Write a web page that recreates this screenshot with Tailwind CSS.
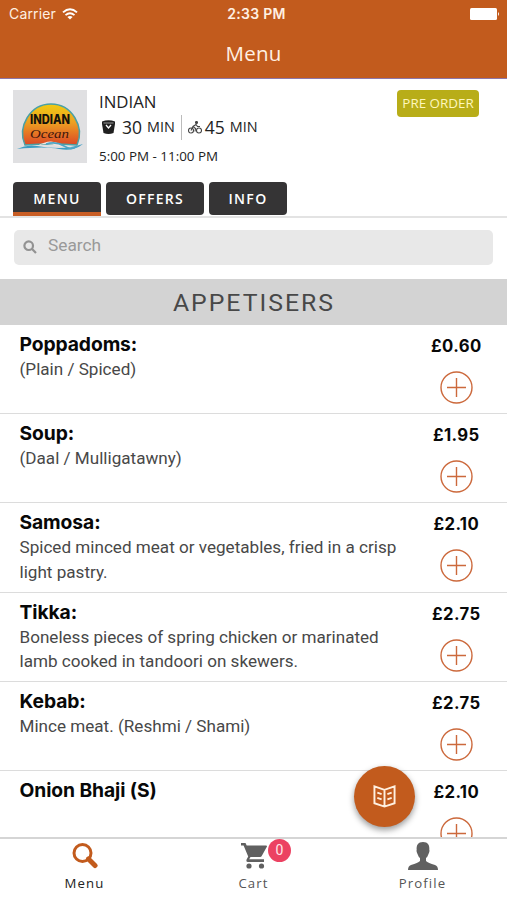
<!DOCTYPE html>
<html lang="en">
<head>
<meta charset="utf-8">
<title>Menu</title>
<script src="https://cdn.jsdelivr.net/npm/@tailwindcss/browser@4"></script>
</head>
<body class="bg-white">
<div class="relative w-[507px] h-[900px] overflow-hidden bg-white flex flex-col font-['Open_Sans',sans-serif] text-[#222]">
  <header class="h-[79px] shrink-0 bg-[#c25b1d] border-b border-[#8d76a8] text-[#fff0e2]">
    <div class="h-7 grid grid-cols-3 items-center pl-[9px] pr-[7px] font-[Inter,sans-serif]">
      <div class="flex items-center gap-[6px]">
        <span class="text-[14px] leading-5 tracking-[0.15px]">Carrier</span>
        <svg class="w-4 h-3" viewBox="0 0 16 12" fill="none" stroke="#fff" stroke-width="1.9"><path d="M1 4.4Q8-2 15 4.4M3.5 7.1Q8 3.2 12.500 7.1"/><path d="M8 11.500L5.400 8.900Q8 7 10.600 8.900Z" fill="#fff" stroke="none"/></svg>
      </div>
      <span class="text-center text-[14px] font-semibold leading-5 tracking-[0.3px] whitespace-nowrap pl-1">2:33 PM</span>
      <svg class="w-[30px] h-3 justify-self-end" viewBox="0 0 30 12" fill="#fff"><rect width="27" height="12" rx="1.500"/><path d="M28 4q2 2 0 4z"/></svg>
    </div>
    <h1 class="text-center text-[20.5px] leading-[50px] font-normal tracking-[0.2px]">Menu</h1>
  </header>

  <section class="h-[139px] shrink-0 border-b-2 border-[#e3e3e3] pl-[13px] flex flex-col justify-between pt-3">
    <div class="flex">
      <svg class="w-[74px] h-[73px] shrink-0 -mt-px" viewBox="0 0 74 73">
        <defs><linearGradient id="sun" x1="0" y1="0" x2="0" y2="1"><stop offset="0" stop-color="#f0cb12"/><stop offset=".45" stop-color="#eda022"/><stop offset="1" stop-color="#dc4726"/></linearGradient></defs>
        <rect width="74" height="73" fill="#e0e0e2"/>
        <path d="M12 55C4 37 17 14 38 14S72 37 64 55Q38 53 12 55Z" fill="url(#sun)" stroke="#4aa0a5" stroke-width="1.500"/>
        <path d="M4 59Q14 54 24 56T46 58T70 54Q60 62 46 59T4 59Z" fill="#3c9cc2"/>
        <path d="M24 56Q37 48 47 54T69 55Q57 60 45 56T24 56Z" fill="#f1e5df"/>
        <path d="M33 54Q43 51 51 56T64 56" fill="none" stroke="#4ca5c6" stroke-width="1.500"/>
        <text x="17" y="33.500" textLength="40" lengthAdjust="spacingAndGlyphs" font-family="Inter, sans-serif" font-weight="800" font-size="12.500" fill="#15130a">INDIAN</text>
        <text x="17" y="47.500" textLength="39" lengthAdjust="spacingAndGlyphs" font-family="Liberation Serif, serif" font-style="italic" font-weight="400" font-size="12" fill="#3c150d">Ocean</text>
      </svg>
      <div class="pl-3 flex-1">
        <div class="text-[16.8px] leading-[22px]">INDIAN</div>
        <div class="flex items-center h-[28px] leading-[28px]">
          <svg class="w-[13px] h-[14px] ml-[3px]" viewBox="0 0 13 14"><path d="M0 1.500Q6.500-1 13 1.500V4L11.500 13Q6.500 15 1.500 13L0 4Z" fill="#202020"/><path d="M1.500 3h10" stroke="#999"/><path d="M4 5l2.500 3L9 5" fill="none" stroke="#fff" stroke-width="1.300"/></svg>
          <span class="text-[17.5px] ml-[7px]">30</span><span class="text-[14.4px] ml-[5px]">MIN</span>
          <span class="w-px h-[25px] bg-[#bbb] ml-[6px]"></span>
          <svg class="w-[14px] h-[13px] ml-[6px]" viewBox="0 0 14 13" fill="none" stroke="#444" stroke-width="1.100"><circle cx="3" cy="9.500" r="2.500"/><circle cx="11" cy="9.500" r="2.500"/><circle cx="8.500" cy="1.500" r="1" fill="#444"/><path d="M3 9.500L5 5.500L8 3.500L9.500 5.500H12M5 5.500L7.500 7.500L7 10.500"/></svg>
          <span class="text-[17.5px] ml-[3px]">45</span><span class="text-[14.4px] ml-[5px]">MIN</span>
        </div>
        <div class="text-[13.4px] leading-[30px] -mb-1">5:00 PM - 11:00 PM</div>
      </div>
      <span class="mr-7 -mt-px w-[82px] h-[27px] rounded-[4px] bg-[#b8ad18] text-[#fff7bd] text-[13.4px] leading-[27px] text-center whitespace-nowrap">PRE ORDER</span>
    </div>
    <nav class="flex gap-[5px] text-white text-[14px] leading-[33px] tracking-[1.300px] text-center font-semibold">
      <span class="w-[88px] h-[34px] rounded-t-[4px] bg-[#353435] border-b-4 border-[#c85d24]">MENU</span>
      <span class="w-[98px] h-[33px] rounded-[4px] bg-[#353435]">OFFERS</span>
      <span class="w-[78px] h-[33px] rounded-[4px] bg-[#353435]">INFO</span>
    </nav>
  </section>

  <div class="h-[61px] shrink-0 pt-3 px-[14px]">
    <div class="h-[35px] rounded-[5px] bg-[#e8e8e8] flex items-center pl-[9px] text-[#999] font-[Roboto,sans-serif]">
      <svg class="w-[14px] h-[14px] -mt-[2px]" viewBox="0 0 14 14" fill="none" stroke="#929292" stroke-width="2.200"><circle cx="5.700" cy="5.700" r="4.300"/><path d="M8.800 8.800L13 13"/></svg>
      <span class="ml-[11px] -mt-1 text-[17.3px]">Search</span>
    </div>
  </div>

  <h2 class="h-[46px] shrink-0 bg-[#d3d3d3] text-center text-[#484848] font-[Roboto,sans-serif] text-[24.8px] leading-[47px] tracking-[2px] pl-px">APPETISERS</h2>

  <main id="dishes" class="flex-1 min-h-0 overflow-hidden"></main>

  <footer class="h-[63px] shrink-0 border-t-2 border-[#d5d5d5] bg-white grid grid-cols-3 text-[13.2px] text-[#555] tracking-[1.100px] text-center">
    <div class="flex flex-col items-center pt-[4px] text-[#222]">
      <svg class="w-[26px] h-[26px]" viewBox="0 0 26 26" fill="none" stroke="#c25b1d"><circle cx="10.500" cy="10" r="8.500" stroke-width="3"/><path d="M16.500 16L23 22.500" stroke-width="5" stroke-linecap="round"/></svg>
      <span class="leading-[28px] font-medium">Menu</span>
    </div>
    <div class="relative flex flex-col items-center pt-[4px]">
      <svg class="w-[26px] h-[26px]" viewBox="0 0 26 26" fill="#606060"><path d="M0 0H4.500L5.700 2.500H25Q26.500 2.500 25.700 4L21 12.500Q20.300 14 19 14H9.500L8.200 16.300H23V19H7Q4.800 19 5.600 16.500L7.200 13.500L2.600 2.600H0Z"/><circle cx="8" cy="23" r="2.600"/><circle cx="20.500" cy="23" r="2.600"/></svg>
      <span class="leading-[28px] font-medium">Cart</span>
      <span class="absolute left-[99px] top-0 w-[23px] h-[23px] rounded-full bg-[#ec4262] text-[#ffe6e9] text-[14px] leading-[23px] tracking-normal font-[Roboto,sans-serif]">0</span>
    </div>
    <div class="flex flex-col items-center pt-[3px]">
      <svg class="w-[30px] h-[28px]" viewBox="0 0 30 28" fill="#606060"><path d="M15 0C10 0 8.300 3 8.700 8Q8 8.500 9.500 12Q10.500 15 12 16V19Q10 21 3 23Q0 24 0 28H30Q30 24 27 23Q20 21 18 19V16Q19.500 15 20.500 12Q22 8.500 21.300 8C21.700 3 20 0 15 0Z"/></svg>
      <span class="leading-[27px] font-medium">Profile</span>
    </div>
  </footer>

  <button class="absolute left-[354px] top-[766px] w-[61px] h-[61px] rounded-full bg-[#c25b1d] shadow-[0_3px_6px_rgba(0,0,0,.4)] flex items-center justify-center">
    <svg class="w-[23px] h-[23px]" viewBox="0 0 24 24" fill="none" stroke="#fff0e0" stroke-width="2"><path d="M12 5L1.500 1.500V19L12 22.500L22.500 19V1.500ZM12 5V22.500M4.500 8L9 9.500M4.500 13.500L9 15M19.500 8L15 9.500M19.500 13.500L15 15"/></svg>
  </button>
</div>
<script>
const dishes = [
  ["Poppadoms:", "(Plain / Spiced)", "£0.60"],
  ["Soup:", "(Daal / Mulligatawny)", "£1.95"],
  ["Samosa:", "Spiced minced meat or vegetables, fried in a crisp light pastry.", "£2.10"],
  ["Tikka:", "Boneless pieces of spring chicken or marinated lamb cooked in tandoori on skewers.", "£2.75"],
  ["Kebab:", "Mince meat. (Reshmi / Shami)", "£2.75"],
  ["Onion Bhaji (S)", "", "£2.10"]
];
document.getElementById("dishes").innerHTML = dishes.map(([name, info, price]) => `
  <article class="h-[89.200px] border-b-[1.500px] border-[#dcdcdc] flex pl-[19.500px] pr-[4px] pt-[6px]">
    <div class="w-[390px]">
      <h3 class="font-[Inter,sans-serif] font-bold text-[19.300px] leading-[26px] tracking-[-0.100px] text-[#080808]">${name}</h3>
      <p class="font-[Roboto,sans-serif] text-[17.100px] leading-[24.500px] text-[#484848]">${info}</p>
    </div>
    <div class="flex-1 flex flex-col items-center">
      <span class="font-[Inter,sans-serif] font-bold text-[16.700px] leading-[31px] tracking-[0.400px] text-[#080808]">${price}</span>
      <svg class="w-[33px] h-[33px] mt-[9px]" viewBox="0 0 33 33" fill="none" stroke="#cc693c" stroke-width="1.400"><circle cx="16.500" cy="16.500" r="15.500"/><path d="M16.500 7V26M7 16.500H26"/></svg>
    </div>
  </article>`).join("");
</script>
</body>
</html>
